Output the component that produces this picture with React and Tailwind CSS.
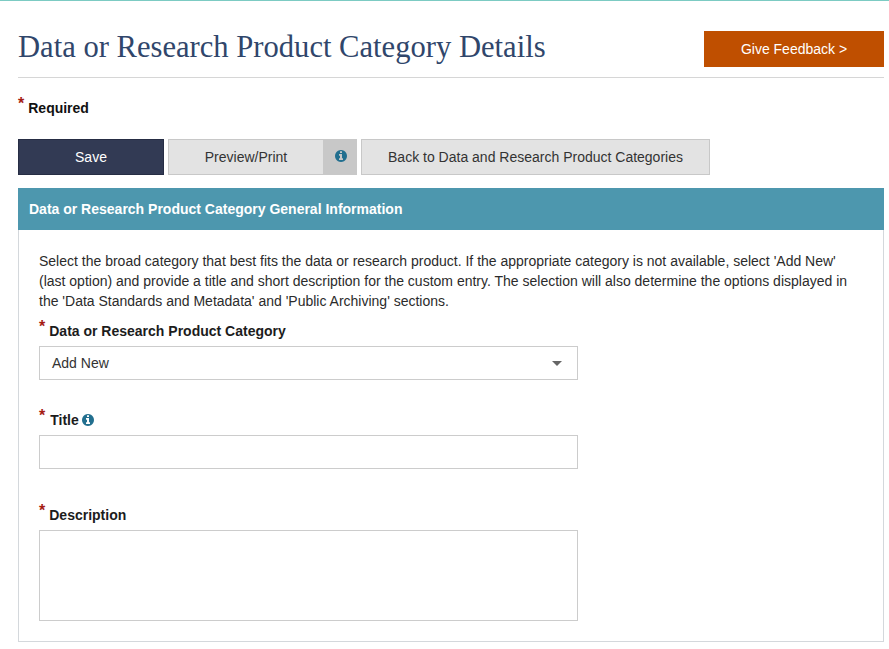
function Star() {
  return <span className="text-[#a51c14] text-[16px] leading-none font-bold relative top-[-4px]">*</span>;
}

function InfoIcon({ className }) {
  return (
    <svg viewBox="128 128 1536 1536" className={`w-[12px] h-[12px] fill-[#226f8f] ${className}`}>
      <path
        fillRule="evenodd"
        d="M1152 1376v-160q0-14-9-23t-23-9h-96v-512q0-14-9-23t-23-9h-320q-14 0-23 9t-9 23v160q0 14 9 23t23 9h96v320h-96q-14 0-23 9t-9 23v160q0 14 9 23t23 9h448q14 0 23-9t9-23zm-128-896v-160q0-14-9-23t-23-9h-192q-14 0-23 9t-9 23v160q0 14 9 23t23 9h192q14 0 23-9t9-23zm640 416q0 209-103 385.5t-279.5 279.5-385.5 103-385.5-103-279.5-279.5-103-385.5 103-385.5 279.5-279.5 385.5-103 385.5 103 279.5 279.5 103 385.5z"
      />
    </svg>
  );
}

function FieldLabel({ children, gap = "ml-[4px]" }) {
  return (
    <div className="flex items-center h-[20px] text-[14px] font-bold text-[#1c1c1c]">
      <Star />
      <span className={`${gap} flex items-center`}>{children}</span>
    </div>
  );
}

export default function App() {
  return (
    <div className="w-[889px] h-[649px] overflow-hidden bg-white border-t border-[#7ccbc3] font-['Liberation_Sans',Arial,sans-serif] text-[14px] text-[#212121]">
      <div className="ml-[18px] w-[866px]">
        {/* page title */}
        <div className="flex items-start justify-between h-[76px] border-b border-[#d6d6d6] box-content">
          <h1 className="mt-[27px] font-['Liberation_Serif',Georgia,serif] text-[30.6px] leading-[38px] text-[#30466b]">
            Data or Research Product Category Details
          </h1>
          <a className="mt-[30px] w-[180px] h-[36px] flex items-center justify-center bg-[#bf4f00] text-white">
            Give Feedback &gt;
          </a>
        </div>

        <div className="flex items-center h-[20px] mt-[20px] mb-[21px] font-bold text-[#111]">
          <Star />
          <span className="ml-[4px]">Required</span>
        </div>

        {/* action buttons */}
        <div className="flex gap-[4px]">
          <button className="w-[146px] h-[36px] bg-[#323a54] border border-[#262d44] text-white">Save</button>
          <div className="flex w-[189px] h-[36px] bg-[#e3e3e3] border border-[#c8c8c8] text-[#333]">
            <span className="flex-1 flex items-center justify-center">Preview/Print</span>
            <span className="w-[33px] bg-[#c8c8c8] flex items-start justify-center pt-[10px] pl-[2px]">
              <InfoIcon />
            </span>
          </div>
          <button className="w-[349px] h-[36px] bg-[#e3e3e3] border border-[#c8c8c8] text-[#333]">
            Back to Data and Research Product Categories
          </button>
        </div>

        {/* general information panel */}
        <div className="mt-[13px]">
          <div className="h-[42px] bg-[#4d97ae] flex items-center px-[11px] font-bold text-white">
            Data or Research Product Category General Information
          </div>
          <div className="h-[412px] border border-t-0 border-[#d4d8dc] px-[20px] pt-[21px]">
            <p className="text-[14px] leading-[20px] text-[#2b2b2b]">
              Select the broad category that best fits the data or research product. If the appropriate category is not available, select 'Add New' (last option) and provide a title and short description for the custom entry. The selection will also determine the options displayed in the 'Data Standards and Metadata' and 'Public Archiving' sections.
            </p>

            <div className="mt-[10px]">
              <FieldLabel>Data or Research Product Category</FieldLabel>
              <div className="mt-[5px] w-[539px] h-[34px] border border-[#cccccc] flex items-center justify-between pl-[12px] pr-[15px]">
                <span className="text-[#333]">Add New</span>
                <span className="w-0 h-0 border-x-[5px] border-x-transparent border-t-[5px] border-t-[#666]" />
              </div>
            </div>

            <div className="mt-[30px]">
              <FieldLabel gap="ml-[5px]">
                Title
                <InfoIcon className="ml-[3px]" />
              </FieldLabel>
              <input className="block mt-[5px] w-[539px] h-[34px] border border-[#cccccc]" />
            </div>

            <div className="mt-[36px]">
              <FieldLabel>Description</FieldLabel>
              <textarea className="block mt-[5px] w-[539px] h-[91px] border border-[#cccccc] resize-none" />
            </div>
          </div>
        </div>
      </div>
    </div>
  );
}
